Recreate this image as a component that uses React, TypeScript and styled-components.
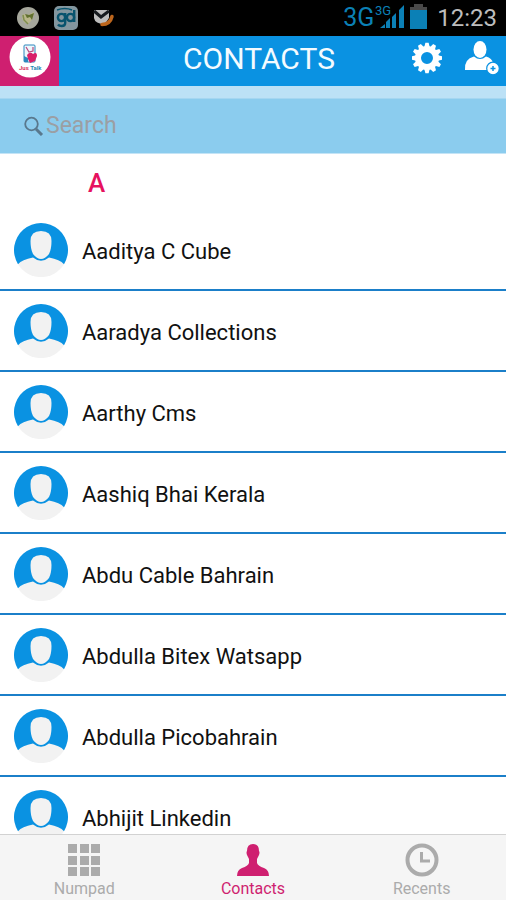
import React from 'react';
import styled, { createGlobalStyle } from 'styled-components';

const blue = '#0a92e2';
const pink = '#cf1f70';

const GlobalStyle = createGlobalStyle`
  * { box-sizing: border-box; }
  body { margin: 0; background: #fff; font-family: Roboto, "Noto Sans", sans-serif; }
`;

const Screen = styled.div`
  display: flex;
  flex-direction: column;
  height: 100vh;
  overflow: hidden;
  background: #fff;
`;

const StatusBar = styled.div`
  display: flex;
  flex: none;
  align-items: center;
  justify-content: space-between;
  height: 36px;
  padding: 0 9px 0 16px;
  background: #000;
`;

const Notices = styled.div`
  display: flex;
  align-items: center;
  gap: 14px;
  svg { display: block; }
`;

const Signals = styled.div`
  display: flex;
  align-items: center;
  color: #0b80b6;
  svg { display: block; }
`;

const Network = styled.span`
  font-size: 25px;
  line-height: 36px;
`;

const Clock = styled.time`
  margin-left: 10px;
  color: #bdbdbd;
  font-size: 24px;
  line-height: 36px;
`;

const Header = styled.header`
  display: grid;
  flex: none;
  grid-template-columns: 1fr auto 1fr;
  align-items: center;
  height: 50px;
  background: ${blue};
`;

const LogoTile = styled.div`
  display: flex;
  justify-content: center;
  width: 59px;
  height: 50px;
  background: ${pink};
`;

const Title = styled.h1`
  margin: 0;
  padding: 0 0 4px 12px;
  color: #f4fbff;
  font-size: 30px;
  font-weight: 400;
  line-height: 46px;
`;

const Actions = styled.div`
  display: flex;
  justify-content: flex-end;
  gap: 22px;
  padding: 0 6px 6px 0;
`;

const IconButton = styled.button`
  padding: 0;
  border: 0;
  background: none;
  cursor: pointer;
  svg { display: block; }
`;

const Band = styled.div`
  flex: none;
  height: 12px;
  background: #bce1f6;
`;

const SearchBar = styled.label`
  display: flex;
  flex: none;
  align-items: center;
  gap: 2px;
  height: 56px;
  padding: 0 24px;
  border-top: 1px solid #a5d6f1;
  border-bottom: 1px solid #c4e4f6;
  background: #8bccee;
`;

const SearchInput = styled.input`
  flex: 1;
  min-width: 0;
  padding: 0;
  border: 0;
  outline: 0;
  background: none;
  color: #555;
  font: 400 23px/32px Roboto, sans-serif;
  &::placeholder { color: #9b9fa4; opacity: 1; }
`;

const List = styled.main`
  flex: 1;
  min-height: 0;
  overflow-y: auto;
  scrollbar-width: none;
`;

const Letter = styled.h2`
  margin: 0;
  padding: 2px 0 0 88px;
  color: #e6125f;
  font-size: 26px;
  font-weight: 500;
  line-height: 54px;
`;

const Contacts = styled.ul`
  margin: 0;
  padding: 0;
  list-style: none;
`;

const ContactRow = styled.a`
  display: flex;
  align-items: center;
  gap: 14px;
  height: 81px;
  padding: 0 14px;
  border-bottom: 2px solid #1b7fc9;
  color: #111;
  font-size: 22px;
  line-height: 30px;
  text-decoration: none;
`;

const ContactName = styled.span`
  padding-top: 5px;
`;

const TabBar = styled.nav`
  display: grid;
  flex: none;
  grid-template-columns: repeat(3, 1fr);
  height: 66px;
  border-top: 1px solid #d2d2d2;
  background: #f5f5f5;
`;

const Tab = styled.a<{ $active?: boolean }>`
  display: flex;
  flex-direction: column;
  align-items: center;
  gap: 2px;
  padding-top: 8px;
  color: ${(p) => (p.$active ? pink : '#ababab')};
  font-size: 16px;
  line-height: 20px;
  text-decoration: none;
`;

function GlobeNotice() {
  return (
    <svg width="24" height="24" viewBox="0 0 24 24" aria-hidden="true">
      <circle cx="12" cy="12" r="11" fill="#a6a79c" />
      <path d="M7 8l5 1 6-3-1 5-2 4-3 3-4-2-2-4z" fill="#b9b68a" />
      <path d="M9 8l4 1 5-2-2 7-2-3-3 1z" fill="#61702f" />
      <path d="M7 9l1 5 4 4" stroke="#7e8d4d" strokeWidth="1.5" fill="none" />
    </svg>
  );
}

function DialerNotice() {
  return (
    <svg width="24" height="24" viewBox="0 0 24 24" aria-hidden="true">
      <rect width="24" height="24" rx="5" fill="#83969f" />
      <g fill="none" stroke="#07536e" strokeWidth="2.4">
        <circle cx="7.5" cy="11.5" r="3.6" />
        <path d="M11.2 7v10q0 3-3.5 3Q5 20 4 18.5" />
        <circle cx="16.5" cy="11.5" r="3.6" />
        <path d="M20.2 4v12" />
        <path d="M3 4q8-3 15 0" strokeWidth="1.4" />
      </g>
    </svg>
  );
}

function MailNotice() {
  return (
    <svg width="24" height="20" viewBox="0 0 24 20" aria-hidden="true">
      <path d="M2 2h15v8l-4 6Q3 16 2 10z" fill="#bdbdbd" />
      <path d="M2 3l7 6 8-6" fill="none" stroke="#171b1f" strokeWidth="3" />
      <path d="M10 16.5q8 0 10-8" fill="none" stroke="#bd661d" strokeWidth="3.5" strokeLinecap="round" />
    </svg>
  );
}

function SignalIcon() {
  return (
    <svg width="36" height="32" viewBox="0 0 36 32" aria-hidden="true">
      <text x="1" y="13" fontSize="13" fontFamily="Roboto, sans-serif" fill="currentColor">3G</text>
      <path d="M6 26l5-4v4zM12 20l4-4v10h-4zM18 15l4-4v15h-4zM25 8l5-5v23h-5z" fill="currentColor" />
    </svg>
  );
}

function BatteryIcon() {
  return (
    <svg width="17" height="28" viewBox="0 0 17 28" aria-hidden="true">
      <path d="M4 0h9v3h4v4H0V3h4z" fill="#494949" />
      <path d="M0 6h17v19H0z" fill="currentColor" />
    </svg>
  );
}

function Logo() {
  return (
    <svg width="42" height="42" viewBox="0 0 42 42" role="img" aria-label="Jus Talk">
      <circle cx="21" cy="21" r="20.5" fill="#fff" />
      <rect x="15" y="9" width="11" height="17" rx="1" fill="#eef7fc" stroke="#2c87bd" />
      <path d="M17 11l3 5 4-1V11" fill="none" stroke="#b8487e" strokeWidth="1.2" />
      <path d="M15 20l4 2v4h-4z" fill="#2c87bd" />
      <path d="M18 19q3-4 6-1 4-3 4 2l-2 5-5 2-2-4z" fill="#d91f69" />
      <text x="10" y="34" fontFamily="Roboto, sans-serif" fontSize="6" fontWeight="700">
        <tspan fill="#d8315f">Jus </tspan>
        <tspan fill="#2487b3">Talk</tspan>
      </text>
    </svg>
  );
}

function GearIcon() {
  return (
    <svg width="30" height="32" viewBox="-15 -16 30 32" aria-hidden="true">
      <g fill="#fff">
        {Array.from({ length: 12 }, (_, i) => (
          <path key={i} d="M-3-10L-1.6-15.2H1.6L3-10z" transform={`rotate(${i * 30})`} />
        ))}
      </g>
      <circle r="9" fill="none" stroke="#fff" strokeWidth="6" />
    </svg>
  );
}

function AddPersonIcon() {
  return (
    <svg width="36" height="34" viewBox="0 1 36 34" aria-hidden="true">
      <ellipse cx="16" cy="9.5" rx="6.5" ry="8.5" fill="#fff" />
      <path d="M1 30Q0 19 10 16.5q6 5 12 0Q28 18 29 23l-5 7z" fill="#fff" />
      <circle cx="29" cy="28.5" r="6.3" fill="#fff" stroke={blue} strokeWidth="1.2" />
      <path d="M29 26v5M26.500 28.500h5" stroke={blue} strokeWidth="1.5" />
    </svg>
  );
}

function SearchIcon() {
  return (
    <svg width="20" height="20" viewBox="0 0 20 20" aria-hidden="true">
      <circle cx="7.5" cy="8" r="6.3" fill="none" stroke="#59788d" strokeWidth="1.8" />
      <path d="M12 13l6 6" stroke="#59788d" strokeWidth="3" />
    </svg>
  );
}

function Avatar() {
  return (
    <svg width="54" height="54" viewBox="0 0 54 54" aria-hidden="true">
      <path d="M4 41.200Q8 36 19 33.500H35Q46 36 50 41.200A27 27 0 0 1 4 41.200z" fill="#f2f2f2" />
      <path d="M4 41.200A27 27 0 1 1 50 41.200Q46 36.500 35 34.500Q27 41 19 34.500Q8 36.500 4 41.200z" fill={blue} />
      <path d="M16.500 18q0-10 10.500-10T37.500 18q0 8-2.500 13-4 5-8 5t-8-5q-2.500-5-2.500-13z" fill="#f2f2f2" />
    </svg>
  );
}

function NumpadIcon() {
  return (
    <svg width="34" height="34" viewBox="0 0 34 34" fill="currentColor" aria-hidden="true">
      {[1, 13, 24].map((y) => [1, 13, 24].map((x) => <rect key={`${x}-${y}`} x={x} y={y} width="9" height="9" />))}
    </svg>
  );
}

function PersonIcon() {
  return (
    <svg width="34" height="34" viewBox="0 0 34 34" fill="currentColor" aria-hidden="true">
      <path d="M11 8q0-7 6-7t6 7q1 1 0 4-1 2-2 4v4q1 3 7 5 5 2 5 8H1q0-6 5-8 6-2 7-5v-4q-1-2-2-4-1-3 0-4z" />
    </svg>
  );
}

function RecentIcon() {
  return (
    <svg width="34" height="34" viewBox="0 0 34 34" fill="none" stroke="currentColor" aria-hidden="true">
      <circle cx="17" cy="17" r="14.5" strokeWidth="4" />
      <path d="M16.500 9v9H25" strokeWidth="3" />
    </svg>
  );
}

const names = [
  'Aaditya C Cube',
  'Aaradya Collections',
  'Aarthy Cms',
  'Aashiq Bhai Kerala',
  'Abdu Cable Bahrain',
  'Abdulla Bitex Watsapp',
  'Abdulla Picobahrain',
  'Abhijit Linkedin',
];

export default function App() {
  return (
    <Screen>
      <GlobalStyle />
      <StatusBar>
        <Notices>
          <GlobeNotice />
          <DialerNotice />
          <MailNotice />
        </Notices>
        <Signals>
          <Network>3G</Network>
          <SignalIcon />
          <BatteryIcon />
          <Clock>12:23</Clock>
        </Signals>
      </StatusBar>
      <Header>
        <LogoTile><Logo /></LogoTile>
        <Title>CONTACTS</Title>
        <Actions>
          <IconButton type="button" aria-label="Settings"><GearIcon /></IconButton>
          <IconButton type="button" aria-label="Add contact"><AddPersonIcon /></IconButton>
        </Actions>
      </Header>
      <Band />
      <SearchBar>
        <SearchIcon />
        <SearchInput type="text" placeholder="Search" aria-label="Search" />
      </SearchBar>
      <List>
        <Letter>A</Letter>
        <Contacts>
          {names.map((name) => (
            <li key={name}>
              <ContactRow href="#contact">
                <Avatar />
                <ContactName>{name}</ContactName>
              </ContactRow>
            </li>
          ))}
        </Contacts>
      </List>
      <TabBar>
        <Tab href="#numpad"><NumpadIcon />Numpad</Tab>
        <Tab href="#contacts" $active aria-current="page"><PersonIcon />Contacts</Tab>
        <Tab href="#recents"><RecentIcon />Recents</Tab>
      </TabBar>
    </Screen>
  );
}
